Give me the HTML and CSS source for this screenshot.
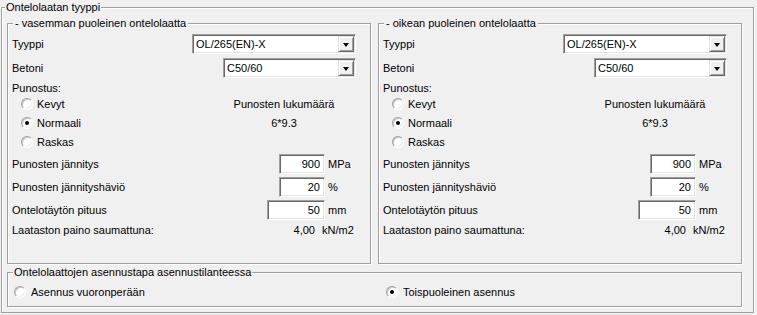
FILE: index.html
```html
<!DOCTYPE html>
<html lang="fi">
<head>
  <meta charset="UTF-8">
  <title>Ontelolaatan tyyppi</title>
  <link rel="stylesheet" href="styles.css">
</head>
<body>

  <fieldset class="group outer">
    <legend>Ontelolaatan tyyppi</legend>

    <div class="sides">
      <fieldset class="group side">
        <legend>- vasemman puoleinen ontelolaatta</legend>

        <div class="row combo-row">
          <span class="label">Tyyppi</span>
          <div class="combo type"><span class="value">OL/265(EN)-X</span><span class="drop"></span></div>
        </div>
        <div class="row combo-row">
          <span class="label">Betoni</span>
          <div class="combo concrete"><span class="value">C50/60</span><span class="drop"></span></div>
        </div>

        <div class="row caption">Punostus:</div>
        <div class="strands">
          <label class="radio r1"><span class="dot"></span>Kevyt</label>
          <span class="count r1">Punosten lukumäärä</span>
          <label class="radio r2"><span class="dot on"></span>Normaali</label>
          <span class="count r2">6*9.3</span>
          <label class="radio r3"><span class="dot"></span>Raskas</label>
        </div>

        <div class="row field-row">
          <span class="label">Punosten jännitys</span>
          <span class="box">900</span>
          <span class="unit">MPa</span>
        </div>
        <div class="row field-row">
          <span class="label">Punosten jännityshäviö</span>
          <span class="box">20</span>
          <span class="unit">%</span>
        </div>
        <div class="row field-row">
          <span class="label">Ontelotäytön pituus</span>
          <span class="box long">50</span>
          <span class="unit">mm</span>
        </div>
        <div class="row weight-row">
          <span class="label">Laataston paino saumattuna:</span>
          <span class="weight">4,00</span>
          <span class="unit wide">kN/m2</span>
        </div>
      </fieldset>

      <fieldset class="group side">
        <legend>- oikean puoleinen ontelolaatta</legend>

        <div class="row combo-row">
          <span class="label">Tyyppi</span>
          <div class="combo type"><span class="value">OL/265(EN)-X</span><span class="drop"></span></div>
        </div>
        <div class="row combo-row">
          <span class="label">Betoni</span>
          <div class="combo concrete"><span class="value">C50/60</span><span class="drop"></span></div>
        </div>

        <div class="row caption">Punostus:</div>
        <div class="strands">
          <label class="radio r1"><span class="dot"></span>Kevyt</label>
          <span class="count r1">Punosten lukumäärä</span>
          <label class="radio r2"><span class="dot on"></span>Normaali</label>
          <span class="count r2">6*9.3</span>
          <label class="radio r3"><span class="dot"></span>Raskas</label>
        </div>

        <div class="row field-row">
          <span class="label">Punosten jännitys</span>
          <span class="box">900</span>
          <span class="unit">MPa</span>
        </div>
        <div class="row field-row">
          <span class="label">Punosten jännityshäviö</span>
          <span class="box">20</span>
          <span class="unit">%</span>
        </div>
        <div class="row field-row">
          <span class="label">Ontelotäytön pituus</span>
          <span class="box long">50</span>
          <span class="unit">mm</span>
        </div>
        <div class="row weight-row">
          <span class="label">Laataston paino saumattuna:</span>
          <span class="weight">4,00</span>
          <span class="unit wide">kN/m2</span>
        </div>
      </fieldset>
    </div>

    <fieldset class="group mount">
      <legend>Ontelolaattojen asennustapa asennustilanteessa</legend>
      <div class="mount-row">
        <label class="radio"><span class="dot"></span>Asennus vuoronperään</label>
        <label class="radio"><span class="dot on"></span>Toispuoleinen asennus</label>
      </div>
    </fieldset>
  </fieldset>

</body>
</html>
```

FILE: styles.css
```css
body {
  margin: 0;
  background-color: #f0f0f0;
  font-family: "Liberation Sans", Arial, sans-serif;
  font-size: 11px;
  color: #000;
}

/* group boxes */
.group {
  margin: 0;
  padding: 0;
  min-inline-size: 0;
  box-sizing: border-box;
  border: 1px solid #a0a0a0;
  box-shadow: inset 1px 1px 0 #fff, 1px 1px 0 #fff;
}

.group legend {
  line-height: 13px;
  padding: 0 1px;
  background-color: #f0f0f0;
}

.outer {
  margin: 1px 0 0 1px;
  width: 753px;
  height: 312px;
  padding: 3px 11px 0 5px;
}

.outer > legend {
  margin-left: -2px;
}

.sides {
  display: flex;
  gap: 7px;
}

.side {
  width: 364px;
  height: 247px;
  padding: 0 14px 0 4px;
}

.side legend {
  margin-left: 1px;
  padding: 0 2px;
}

/* rows */
.row {
  display: flex;
  align-items: center;
}

.label {
  flex: 1;
  white-space: nowrap;
}

.combo-row {
  height: 21px;
  margin-top: 3px;
}

.caption {
  height: 14px;
  margin-top: 3px;
}

.field-row {
  height: 20px;
  margin-top: 3px;
}

.weight-row {
  height: 14px;
  margin-top: 3px;
}

/* combo boxes */
.combo {
  display: flex;
  align-items: stretch;
  box-sizing: border-box;
  height: 20px;
  background-color: #fff;
  border: 1px solid;
  border-color: #a0a0a0 #fff #fff #a0a0a0;
  box-shadow: inset 1px 1px 0 #696969, inset -1px -1px 0 #e3e3e3;
  padding: 1px;
}

.combo.type {
  width: 164px;
}

.combo.concrete {
  width: 133px;
}

.combo .value {
  flex: 1;
  padding-left: 2px;
  line-height: 16px;
}

.drop {
  width: 16px;
  box-sizing: border-box;
  position: relative;
  background-color: #f0f0f0;
  border: 1px solid;
  border-color: #e3e3e3 #696969 #696969 #e3e3e3;
  box-shadow: inset 1px 1px 0 #fff, inset -1px -1px 0 #a0a0a0;
}

.drop::after {
  content: "";
  position: absolute;
  left: 4px;
  top: 6px;
  border-left: 3.5px solid transparent;
  border-right: 3.5px solid transparent;
  border-top: 4px solid #000;
}

/* radio buttons */
.radio {
  display: flex;
  align-items: center;
  white-space: nowrap;
}

.dot {
  width: 12px;
  height: 12px;
  box-sizing: border-box;
  margin-right: 4px;
  border-radius: 50%;
  background-color: #fff;
  border: 1px solid;
  border-color: #a0a0a0 #fff #fff #a0a0a0;
  box-shadow: inset 1px 1px 0 #c8c8c8, inset -1px -1px 0 #ececec;
  display: flex;
  align-items: center;
  justify-content: center;
}

.dot.on::after {
  content: "";
  width: 4px;
  height: 4px;
  border-radius: 50%;
  background-color: #000;
}

.strands {
  display: grid;
  grid-template-columns: 212px 120px;
  grid-template-rows: 18px 19px 19px;
  align-items: center;
}

.strands .radio {
  grid-column: 1;
  padding-left: 9px;
}

.strands .count {
  grid-column: 2;
  text-align: center;
}

.r1 { grid-row: 1; }
.r2 { grid-row: 2; }
.r3 { grid-row: 3; }

/* text boxes */
.box {
  width: 46px;
  height: 20px;
  box-sizing: border-box;
  text-align: right;
  padding-right: 4px;
  line-height: 18px;
  background-color: #fff;
  border: 1px solid;
  border-color: #a0a0a0 #fff #fff #a0a0a0;
  box-shadow: inset 1px 1px 0 #696969, inset -1px -1px 0 #e3e3e3;
}

.box.long {
  width: 58px;
}

.unit {
  width: 28px;
  margin-left: 3px;
}

.weight {
  text-align: right;
}

.unit.wide {
  width: 34px;
  margin-left: 7px;
}

/* bottom group */
.mount {
  width: 735px;
  height: 41px;
  margin-top: 2px;
  padding: 0 0 0 6px;
}

.mount legend {
  margin-left: -1px;
}

.mount-row {
  display: grid;
  grid-template-columns: 372px auto;
  height: 18px;
  margin-top: 4px;
  align-items: center;
}

.mount-row .dot {
  margin-right: 5px;
}
```
